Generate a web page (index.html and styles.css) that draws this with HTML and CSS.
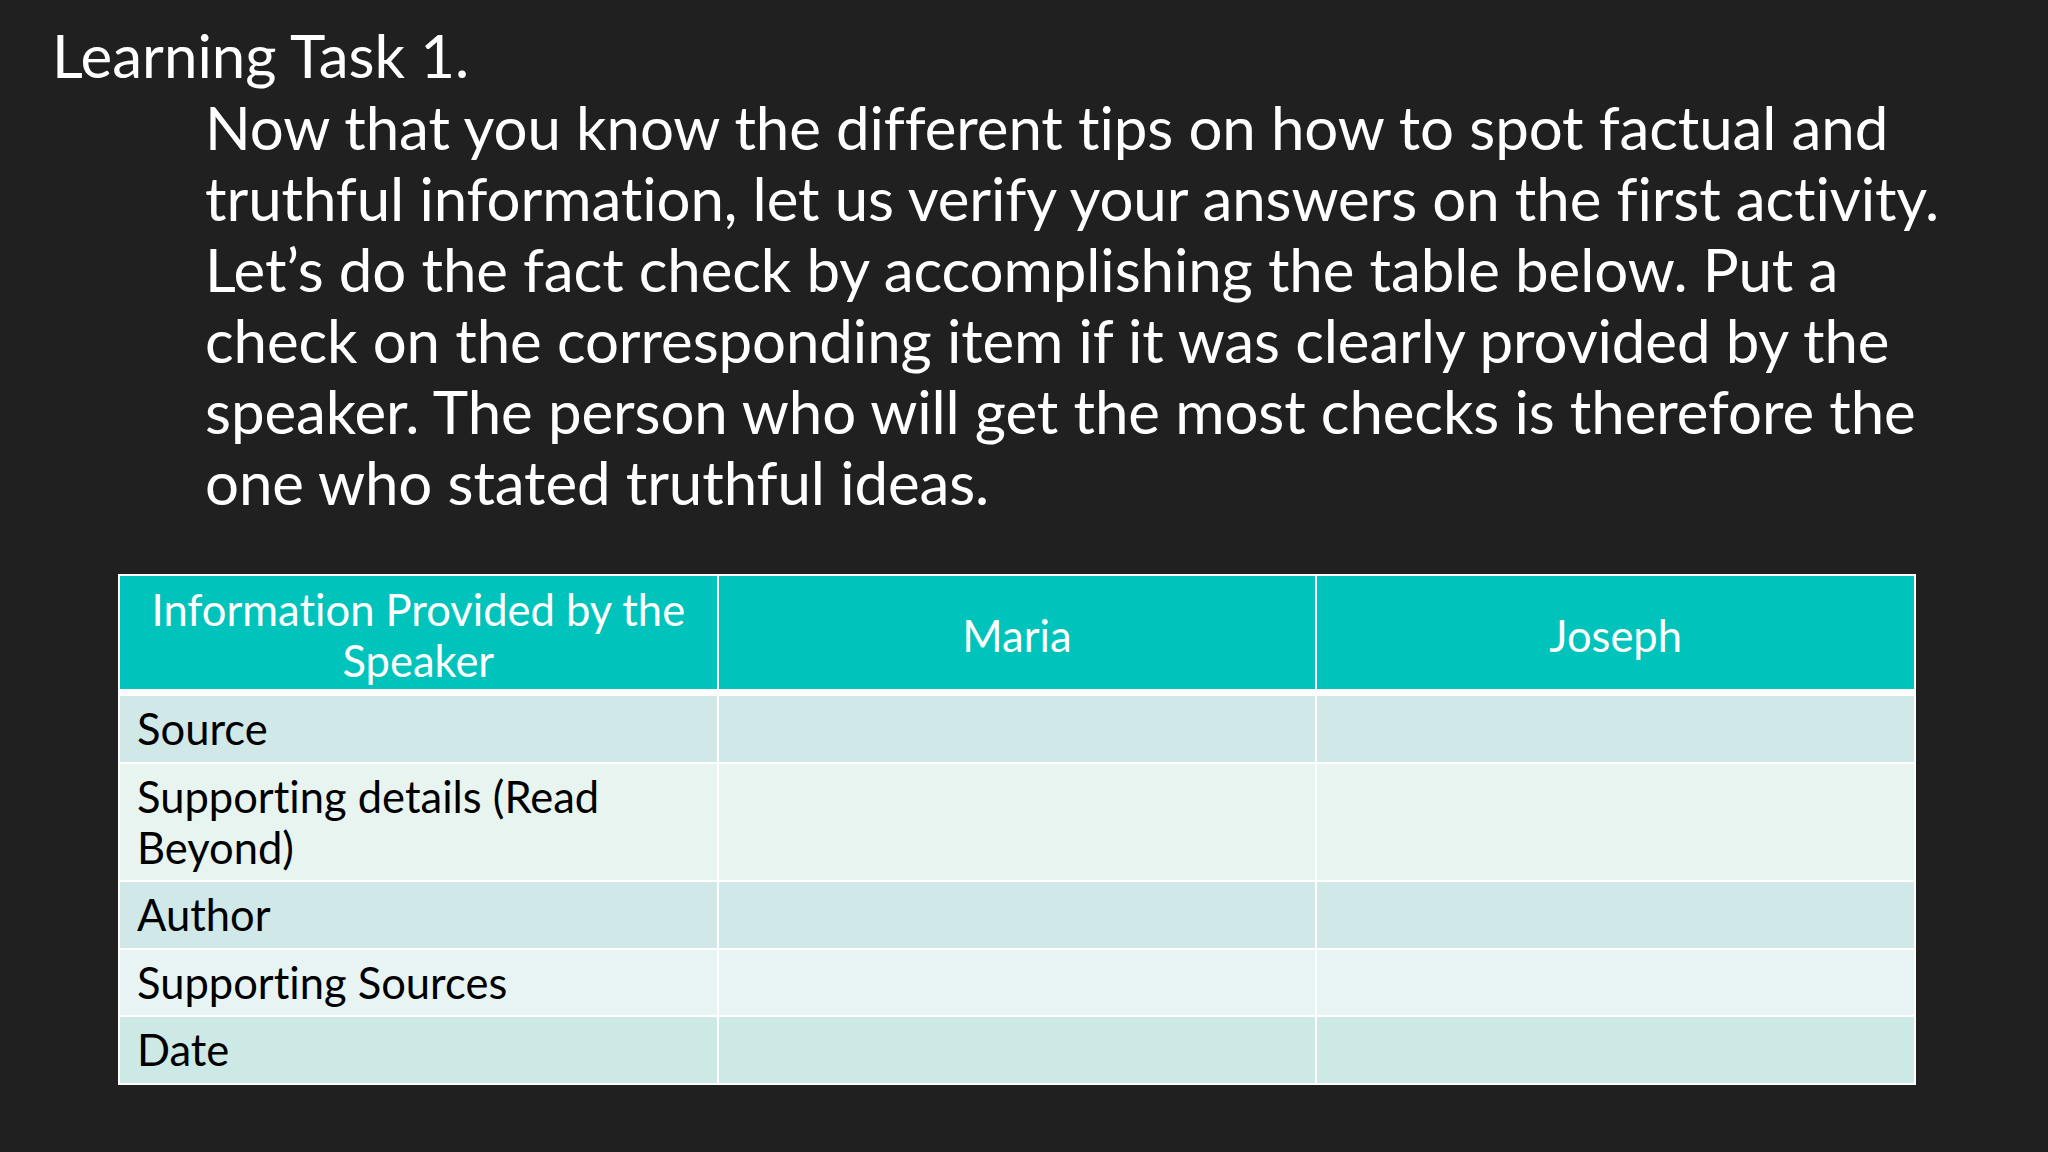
FILE: index.html
```html
<!DOCTYPE html>
<html lang="en">
<head>
<meta charset="utf-8">
<title>Learning Task 1</title>
<link rel="stylesheet" href="styles.css">
</head>
<body>
<div class="slide">
  <h1 class="title">Learning Task 1.</h1>
  <p class="body">Now that you know the different tips on how to spot factual and<br>truthful information, let us verify your answers on the first activity.<br>Let’s do the fact check by accomplishing the table below. Put a<br>check on the corresponding item if it was clearly provided by the<br>speaker. The person who will get the most checks is therefore the<br>one who stated truthful ideas.</p>
  <table class="check-table">
    <thead>
      <tr>
        <th>Information Provided by the<br>Speaker</th>
        <th>Maria</th>
        <th>Joseph</th>
      </tr>
    </thead>
    <tbody>
      <tr class="band-a"><td>Source</td><td></td><td></td></tr>
      <tr class="band-b"><td>Supporting details (Read<br>Beyond)</td><td></td><td></td></tr>
      <tr class="band-a"><td>Author</td><td></td><td></td></tr>
      <tr class="band-c"><td>Supporting Sources</td><td></td><td></td></tr>
      <tr class="band-d"><td>Date</td><td></td><td></td></tr>
    </tbody>
  </table>
</div>
</body>
</html>
```

FILE: styles.css
```css
html, body {
  margin: 0;
  padding: 0;
  background: #202020;
}
.slide {
  width: 2048px;
  height: 1152px;
  box-sizing: border-box;
  padding-top: 20px;
  font-family: Lato, "Open Sans", sans-serif;
  font-variant-ligatures: none;
  font-feature-settings: "liga" 0, "clig" 0;
  color: #ffffff;
}
.title {
  margin: 0;
  padding-left: 52px;
  font-size: 60px;
  font-weight: 400;
  line-height: 71px;
  white-space: nowrap;
}
.body {
  margin: 1px 0 0 0;
  padding-left: 205px;
  font-size: 60px;
  line-height: 71px;
  letter-spacing: -0.1px;
  white-space: nowrap;
}
.check-table {
  margin: 56px 0 0 118px;
  width: 1798px;
  border-collapse: collapse;
  table-layout: fixed;
  border: 2px solid #ffffff;
  font-size: 43.5px;
}
.check-table th {
  background: #00c4bc;
  color: #ffffff;
  font-weight: 400;
  text-align: center;
  line-height: 51px;
  padding: 8px 8px 3px;
  border-left: 2px solid #ffffff;
  border-bottom: 7px solid #ffffff;
}
.check-table td {
  color: #000000;
  line-height: 51px;
  padding: 7px 17px 7.5px;
  border-left: 2px solid #ffffff;
  border-top: 2px solid #ffffff;
  white-space: nowrap;
}
.check-table tbody tr:first-child td {
  border-top: none;
}
.band-a td { background: #d0e8e8; }
.band-b td { background: #e8f4f0; }
.band-c td { background: #e8f4f4; }
.band-d td { background: #cde9e5; }
```
